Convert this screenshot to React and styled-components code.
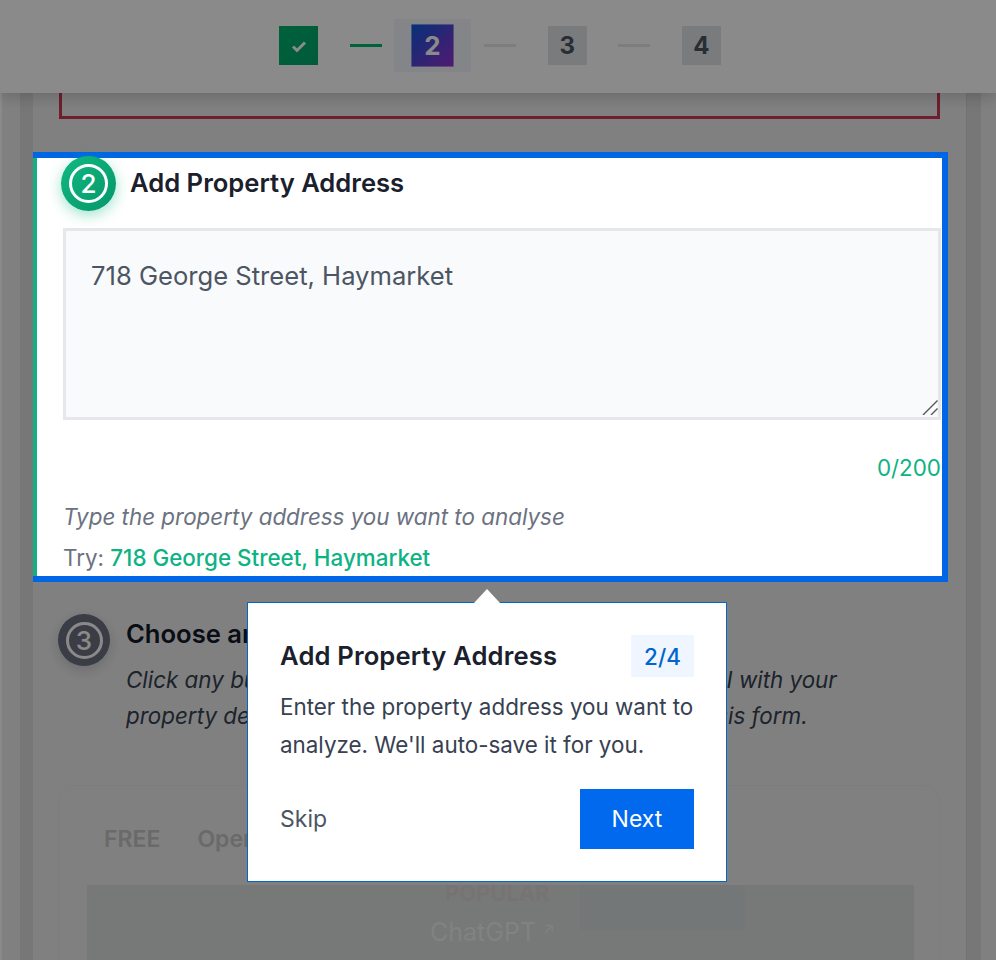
import styled, { createGlobalStyle } from "styled-components"

const Global = createGlobalStyle`
    html, body {
        margin: 0;
        height: 960px;
        overflow: hidden;
        background: #fff;
        font-family: Inter, "Liberation Sans", sans-serif;
    }
    * { box-sizing: border-box; }
`

const Overlay = styled.div`
    position: fixed;
    inset: 0;
    background: rgba(0, 0, 0, 0.46);
    z-index: 10;
`

const Header = styled.header`
    position: relative;
    z-index: 2;
    height: 93px;
    background: #fff;
    box-shadow: 0 4px 14px rgba(0, 0, 0, 0.18);
    display: flex;
    align-items: center;
    justify-content: center;
    padding: 0 0 2px 4px;
    gap: 31.67px;
`

const Step = styled.div`
    position: relative;
    width: 39px;
    height: 39px;
    display: flex;
    align-items: center;
    justify-content: center;
    font-size: 24px;
    font-weight: 700;
    color: ${p => p.$active || p.$done ? "#fff" : "#4b5563"};
    background: ${p => p.$done ? "linear-gradient(135deg, #00b371, #00a868)" : p.$active ? "linear-gradient(135deg, #0558e0, #9b2ad0)" : "#dfe3e8"};
    ${p => p.$active && `
        transform: scale(1.08);
        &::before {
            content: "";
            position: absolute;
            inset: -5px -16px;
            background: rgba(100, 130, 200, 0.07);
            z-index: -1;
        }
    `}
`

const Line = styled.div`
    width: 32px;
    height: 3px;
    background: ${p => p.$done ? "#00b371" : "#e5e7eb"};
`

const Shell = styled.div`
    background: #fff;
    padding-left: 2px;
    height: 867px;
    overflow: hidden;
`

const Gutter = styled.div`
    height: 100%;
    padding: 0 16px 0 18px;
    background: #ededed;
    display: flex;
`

const Side = styled.div`
    width: 13px;
    background: #dcdcdc;
    flex: none;
`

const Card = styled.main`
    width: 934px;
    flex: none;
    background: #ededed;
    border-right: 1px solid #d4d4d4;
    box-shadow: 14px 0 0 #dcdcdc;
`

const Alert = styled.div`
    height: 26px;
    margin: 0 26px 33px 26px;
    border: 3px solid #cc3955;
    border-top: 0;
`

const Focused = styled.section`
    position: relative;
    z-index: 20;
    width: 915px;
    height: 430px;
    background: #fff;
    border-style: solid;
    border-color: #0066e6;
    border-width: 6px 6px 6px 0;
    padding-left: 30px;
    &::before {
        content: "";
        position: absolute;
        left: 0;
        top: 0;
        bottom: 0;
        width: 4px;
        background: #14b084;
    }
`

const SectionHead = styled.div`
    height: 50px;
    display: flex;
    align-items: center;
    gap: 14px;
    margin-left: -2px;
`

const Badge = styled.div`
    flex: none;
    width: ${p => p.$size}px;
    height: ${p => p.$size}px;
    border-radius: 50%;
    background: ${p => p.$dark ? "#6b7280" : "linear-gradient(135deg, #10b981, #059669)"};
    box-shadow: ${p => p.$dark ? "0 4px 12px rgba(107, 114, 128, 0.3)" : "0 4px 14px rgba(16, 185, 129, 0.4)"};
    display: flex;
    align-items: center;
    justify-content: center;
`

const Ring = styled.div`
    width: ${p => p.$size}px;
    height: ${p => p.$size}px;
    border-radius: 50%;
    border: 3px solid #fff;
    color: #fff;
    font-size: 26px;
    font-weight: 500;
    display: flex;
    align-items: center;
    justify-content: center;
`

const SectionTitle = styled.h2`
    margin: 0 0 2px 0;
    font-size: 25.6px;
    font-weight: 600;
    color: #1a202c;
    white-space: nowrap;
`

const FieldWrap = styled.div`
    position: relative;
    width: 878px;
    height: 192px;
    margin-top: 20px;
`

const Field = styled.textarea`
    display: block;
    width: 100%;
    height: 100%;
    padding: 30px 25px;
    background: #f9fafb;
    border: 3px solid #e5e7eb;
    border-radius: 0;
    outline: none;
    resize: none;
    font-family: inherit;
    font-size: 25.6px;
    line-height: 30px;
    color: #4b5563;
`

const Grip = styled.svg`
    position: absolute;
    right: 3px;
    bottom: 5px;
`

const Counter = styled.div`
    width: 878px;
    margin-top: 34px;
    text-align: right;
    font-size: 22.4px;
    line-height: 28px;
    color: #0eb383;
`

const Help = styled.div`
    margin-top: 21px;
    font-size: 22.4px;
    line-height: 28px;
    font-style: italic;
    color: #6b7280;
`

const Try = styled.div`
    margin-top: 13px;
    font-size: 22.4px;
    line-height: 28px;
    color: #6b7280;
    white-space: nowrap;
`

const TryLink = styled.span`
    color: #0eb383;
    font-weight: 500;
`

const Tip = styled.div`
    position: absolute;
    left: 214px;
    top: 444px;
    width: 480px;
    height: 280px;
    z-index: 30;
    background: #fff;
    border: 1px solid #0069c8;
    padding: 32px 32px;
    &::before {
        content: "";
        position: absolute;
        left: 226px;
        top: -14px;
        width: 26px;
        height: 14px;
        background: #fff;
        clip-path: polygon(50% 0, 100% 100%, 0 100%);
    }
`

const TipHead = styled.div`
    display: flex;
    align-items: center;
    justify-content: space-between;
`

const TipTitle = styled.h3`
    margin: 0 0 2px 0;
    font-size: 25.6px;
    font-weight: 600;
    letter-spacing: 0.15px;
    color: #1a202c;
`

const Count = styled.div`
    width: 63px;
    height: 42px;
    background: #eff6ff;
    color: #0066cc;
    font-size: 22.4px;
    font-weight: 500;
    display: flex;
    align-items: center;
    justify-content: center;
`

const TipBody = styled.p`
    margin: 11px 0 0 0;
    font-size: 22.4px;
    line-height: 38px;
    color: #374151;
`

const TipFoot = styled.div`
    margin-top: 25px;
    display: flex;
    align-items: center;
    justify-content: space-between;
`

const Skip = styled.span`
    font-size: 23px;
    color: #4b5563;
`

const Next = styled.button`
    width: 114px;
    height: 60px;
    border: 0;
    background: #0069ee;
    color: #fff;
    font-family: inherit;
    font-size: 23px;
`

const Third = styled.section`
    padding: 32px 26px 0 25px;
`

const ThirdHead = styled.div`
    display: flex;
    gap: 16px;
`

const ThirdText = styled.div`
    min-width: 0;
`

const ThirdTitle = styled.h2`
    margin: 3px 0 0 0;
    font-size: 25.6px;
    line-height: 34px;
    font-weight: 600;
    color: #111827;
`

const ThirdDesc = styled.p`
    margin: 11px 0 0 0;
    font-size: 22.4px;
    line-height: 36px;
    font-style: italic;
    color: #374151;
    white-space: nowrap;
`

const Panel = styled.div`
    margin-top: 51px;
    height: 300px;
    border: 1px solid #e5e7eb;
    border-radius: 16px;
    padding: 36px 25px 0 28px;
`

const Tabs = styled.div`
    display: flex;
    gap: 37px;
    padding-left: 17px;
    font-size: 23px;
    line-height: 34px;
    font-weight: 600;
    color: #c4c4c4;
`

const Table = styled.div`
    margin-top: 29px;
    height: 200px;
    background: #dadfdc;
    padding-left: 343px;
    display: flex;
`

const ModelCol = styled.div`
    width: 150px;
`

const Shade = styled.div`
    width: 165px;
    height: 45px;
    background: #d7dcdc;
`

const Popular = styled.div`
    margin-left: 15px;
    font-size: 22px;
    line-height: 16px;
    font-weight: 600;
    color: #dcd5d2;
`

const Model = styled.div`
    margin-top: 12px;
    font-size: 25px;
    line-height: 32px;
    color: #eef0ee;
    white-space: nowrap;
`

const Arrow = styled.span`
    font-size: 15px;
    vertical-align: 7px;
`

const App = () => {
    return (
        <>
            <Global />
            <Overlay />
            <Header>
                <Step $done>
                    <svg width="16" height="16" viewBox="0 0 16 16" fill="none" stroke="#fff" strokeWidth="3">
                        <path d="M2 8.5l4 4 8-8" />
                    </svg>
                </Step>
                <Line $done />
                <Step $active>2</Step>
                <Line />
                <Step>3</Step>
                <Line />
                <Step>4</Step>
            </Header>
            <Shell>
                <Gutter>
                    <Side />
                    <Card>
                        <Alert />
                        <Focused>
                            <SectionHead>
                                <Badge $size={55}>
                                    <Ring $size={39}>2</Ring>
                                </Badge>
                                <SectionTitle>Add Property Address</SectionTitle>
                            </SectionHead>
                            <FieldWrap>
                                <Field readOnly defaultValue="718 George Street, Haymarket" />
                                <Grip width="16" height="15" viewBox="0 0 16 15" fill="none" stroke="#555" strokeWidth="1.4">
                                    <path d="M1 15L15.5 0.5M9 15L15.5 8.5" />
                                </Grip>
                            </FieldWrap>
                            <Counter>0/200</Counter>
                            <Help>Type the property address you want to analyse</Help>
                            <Try>Try: <TryLink>718 George Street, Haymarket</TryLink></Try>
                            <Tip>
                                <TipHead>
                                    <TipTitle>Add Property Address</TipTitle>
                                    <Count>2/4</Count>
                                </TipHead>
                                <TipBody>Enter the property address you want to analyze. We'll auto-save it for you.</TipBody>
                                <TipFoot>
                                    <Skip>Skip</Skip>
                                    <Next>Next</Next>
                                </TipFoot>
                            </Tip>
                        </Focused>
                        <Third>
                            <ThirdHead>
                                <Badge $size={52} $dark>
                                    <Ring $size={37}>3</Ring>
                                </Badge>
                                <ThirdText>
                                    <ThirdTitle>Choose an AI Platform</ThirdTitle>
                                    <ThirdDesc>
                                        Click any button below to automatically open a trusted AI with your<br />
                                        property details ready to paste in with the correct analysis form.
                                    </ThirdDesc>
                                </ThirdText>
                            </ThirdHead>
                            <Panel>
                                <Tabs>
                                    <span>FREE</span>
                                    <span>OpenAI</span>
                                </Tabs>
                                <Table>
                                    <ModelCol>
                                        <Popular>POPULAR</Popular>
                                        <Model>ChatGPT <Arrow>↗</Arrow></Model>
                                    </ModelCol>
                                    <Shade />
                                </Table>
                            </Panel>
                        </Third>
                    </Card>
                </Gutter>
            </Shell>
        </>
    )
}

export default App
